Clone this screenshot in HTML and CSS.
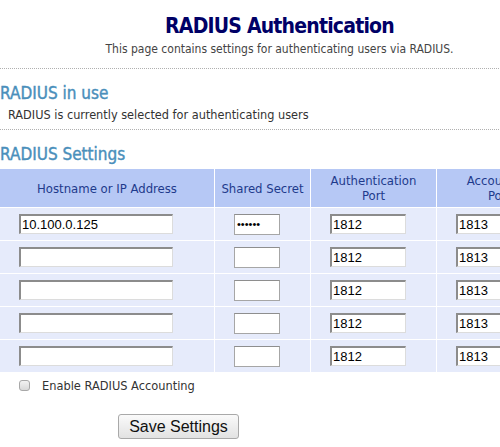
FILE: index.html
```html
<!DOCTYPE html>
<html>
<head>
<meta charset="utf-8">
<link rel="stylesheet" href="styles.css">
</head>
<body>
<div class="page">
  <div class="intro">
    <h1 class="title">RADIUS Authentication</h1>
    <p class="subtitle">This page contains settings for authenticating users via RADIUS.</p>
  </div>
  <div class="section">
    <h2 class="heading">RADIUS in use</h2>
    <p class="note">RADIUS is currently selected for authenticating users</p>
  </div>
  <h2 class="heading heading-settings">RADIUS Settings</h2>
  <table class="servers">
    <thead>
      <tr>
        <th class="c-host">Hostname or IP Address</th>
        <th class="c-secret">Shared Secret</th>
        <th class="c-auth">Authentication<br>Port</th>
        <th class="c-acct">Accounting<br>Port</th>
      </tr>
    </thead>
    <tbody>
      <tr>
        <td><input class="in-host" type="text" value="10.100.0.125"></td>
        <td><input class="in-secret" type="password" value="secret"></td>
        <td><input class="in-port" type="text" value="1812"></td>
        <td><input class="in-port" type="text" value="1813"></td>
      </tr>
      <tr>
        <td><input class="in-host" type="text" value=""></td>
        <td><input class="in-secret" type="password" value=""></td>
        <td><input class="in-port" type="text" value="1812"></td>
        <td><input class="in-port" type="text" value="1813"></td>
      </tr>
      <tr>
        <td><input class="in-host" type="text" value=""></td>
        <td><input class="in-secret" type="password" value=""></td>
        <td><input class="in-port" type="text" value="1812"></td>
        <td><input class="in-port" type="text" value="1813"></td>
      </tr>
      <tr>
        <td><input class="in-host" type="text" value=""></td>
        <td><input class="in-secret" type="password" value=""></td>
        <td><input class="in-port" type="text" value="1812"></td>
        <td><input class="in-port" type="text" value="1813"></td>
      </tr>
      <tr>
        <td><input class="in-host" type="text" value=""></td>
        <td><input class="in-secret" type="password" value=""></td>
        <td><input class="in-port" type="text" value="1812"></td>
        <td><input class="in-port" type="text" value="1813"></td>
      </tr>
    </tbody>
  </table>
  <label class="check-row"><span class="check"></span><span class="check-label">Enable RADIUS Accounting</span></label>
  <div class="actions">
    <button class="save" type="button">Save Settings</button>
  </div>
</div>
</body>
</html>
```

FILE: styles.css
```css
html, body {
  margin: 0;
  padding: 0;
  background: #ffffff;
}
body {
  font-family: "DejaVu Sans Condensed", "DejaVu Sans", sans-serif;
  color: #333333;
  overflow: hidden;
}
.page {
  width: 559px;
}
.intro {
  text-align: center;
  height: 68px;
  border-bottom: 1px dotted #b0b0b0;
}
.title {
  margin: 0;
  padding-top: 13px;
  font-size: 21px;
  letter-spacing: -0.8px;
  line-height: 26px;
  font-weight: bold;
  color: #000066;
}
.subtitle {
  margin: 3px 0 0 0;
  font-size: 12px;
  line-height: 14px;
  color: #444444;
}
.section {
  height: 60px;
  border-bottom: 1px dotted #b0b0b0;
}
.heading {
  margin: 0;
  font-size: 17px;
  line-height: 20px;
  font-weight: normal;
  color: #4a8fbb;
  -webkit-text-stroke: 0.4px #4a8fbb;
}
.section .heading {
  padding-top: 14px;
}
.note {
  margin: 4px 0 0 8px;
  font-size: 12.6px;
  line-height: 16px;
  color: #333333;
}
.heading-settings {
  padding-top: 14px;
  height: 25px;
}
.servers {
  width: 559px;
  border-collapse: collapse;
  table-layout: fixed;
}
.servers th {
  background: #b6c8f5;
  color: #1e3a8c;
  font-weight: normal;
  font-size: 13px;
  line-height: 15px;
  height: 38px;
  padding: 0;
  border: 1px solid #ffffff;
  border-top: none;
  text-align: center;
}
.servers th:first-child, .servers td:first-child { border-left: none; }
.c-host { width: 214px; }
.c-secret { width: 95px; }
.c-auth { width: 125px; }
.c-acct { width: 125px; }
.servers td {
  background: #e6ebfb;
  height: 32px;
  padding: 0 0 0 19px;
  border: 1px solid #ffffff;
  vertical-align: middle;
}
.servers tbody tr:last-child td { border-bottom: none; }
input {
  box-sizing: border-box;
  margin: 0;
  display: block;
  font-family: "Liberation Sans", Arial, sans-serif;
  font-size: 13px;
  color: #000000;
  background: #ffffff;
  padding: 0 1px;
  outline: none;
}
.in-host, .in-port {
  height: 20px;
  border-style: solid;
  border-width: 2px 1px 1px 2px;
  border-color: #8c8c8c #dcdcdc #dcdcdc #8c8c8c;
}
.in-host { width: 154px; }
.in-port { width: 76px; }
.in-secret {
  width: 46px;
  height: 21px;
  border: 1px solid #a6a6a6;
  border-top-color: #8e8e8e;
  font-size: 11px;
  letter-spacing: 0;
  padding: 0 2px;
}
.check-row {
  display: flex;
  align-items: center;
  height: 24px;
  margin-top: 1px;
  padding-left: 19px;
}
.check {
  width: 9px;
  height: 9px;
  border: 1px solid #a8a8a8;
  border-radius: 3px;
  background: linear-gradient(#f2f2f2, #d8d8d8);
}
.check-label {
  margin-left: 12px;
  font-size: 12.7px;
  color: #333333;
}
.actions {
  padding: 17px 0 0 118px;
}
.save {
  box-sizing: border-box;
  width: 121px;
  height: 25px;
  margin: 0;
  padding: 0;
  font-family: "Liberation Sans", Arial, sans-serif;
  font-size: 16px;
  color: #111111;
  border: 1px solid #a9a9a9;
  border-radius: 3px;
  background: linear-gradient(#fafafa, #e2e2e2);
}
```
